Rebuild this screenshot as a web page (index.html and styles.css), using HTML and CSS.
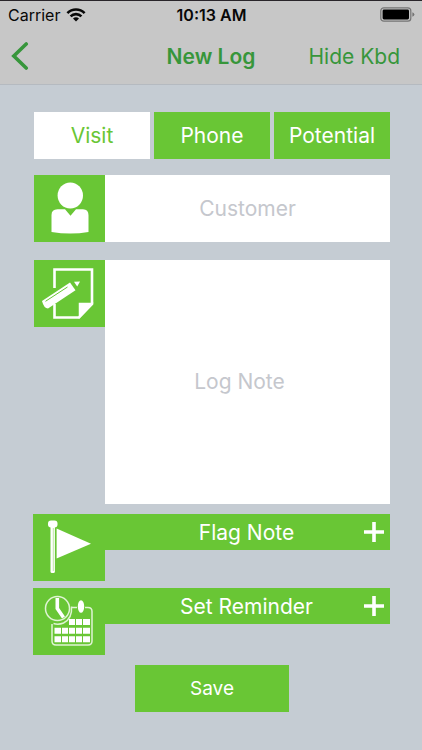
FILE: index.html
```html
<!DOCTYPE html>
<html lang="en">
<head>
<meta charset="utf-8">
<meta name="viewport" content="width=device-width, initial-scale=1">
<title>New Log</title>
<link rel="stylesheet" href="styles.css">
</head>
<body>
<header class="top">
  <div class="status">
    <div class="carrier">
      <span>Carrier</span>
      <svg width="20" height="14" viewBox="0 0 20 14" fill="none" stroke="#080808" stroke-width="2.6" aria-hidden="true">
        <path d="M1.4 5.1a12.2 12.2 0 0 1 17.2 0"/>
        <path d="M4.6 8.4a7.6 7.6 0 0 1 10.8 0"/>
        <path d="M7 10.6a4.3 4.3 0 0 1 6 0L10 13.6z" fill="#080808" stroke="none"/>
      </svg>
    </div>
    <span class="time">10:13 AM</span>
    <svg class="battery" width="35" height="15" viewBox="0 0 35 15" aria-hidden="true">
      <rect x=".8" y=".8" width="30" height="13.4" rx="3" fill="none" stroke="#747474" stroke-width="1.2"/>
      <rect x="2.6" y="2.6" width="26.4" height="9.8" rx="1.4" fill="#000"/>
      <path d="M32.4 5.2q2 .8 2 2.3t-2 2.3z" fill="#747474"/>
    </svg>
  </div>
  <nav class="nav">
    <button class="back" type="button" aria-label="Back">
      <svg width="18" height="28" viewBox="0 0 18 28" fill="none" stroke="#37963b" stroke-width="3.6" stroke-linecap="round" aria-hidden="true"><path d="M15.2 2L2.8 14l12.4 12"/></svg>
    </button>
    <h1 class="title">New Log</h1>
    <button class="hide" type="button">Hide Kbd</button>
  </nav>
</header>
<main class="page">
  <form class="form">
    <div class="tabs">
      <button class="tab tab-on" type="button">Visit</button>
      <button class="tab" type="button">Phone</button>
      <button class="tab" type="button">Potential</button>
    </div>
    <div class="field customer">
      <label class="tile" for="customer" aria-label="Customer">
        <svg width="71" height="67" viewBox="0 0 71 67" fill="#fff" aria-hidden="true">
          <ellipse cx="36.300" cy="20.500" rx="12.700" ry="13"/>
          <path d="M17.500 57V40q0-5.500 6-5.700h7.500l5.500 6.500 5.500-6.500h7q5.500.2 5.500 6V57q-18 3-37 0z"/>
        </svg>
      </label>
      <input class="entry" id="customer" type="text" placeholder="Customer">
    </div>
    <div class="field note">
      <label class="tile" for="note" aria-label="Log note">
        <svg width="71" height="67" viewBox="0 0 71 67" fill="none" aria-hidden="true">
          <path d="M20.500 28V9.500h37.500V44L45 57.500H20.500V44" stroke="#fff" stroke-width="2.600"/>
          <path d="M45.500 57V43.500H58z" fill="#fff" stroke="#fff" stroke-width="1.500"/>
          <path d="M8 41L36 22.500l5.500 7.800L14 48.500q-4 0-6-7.500z" fill="#fff"/>
          <path d="M11.500 41.300l22-14.300" stroke="#69c635" stroke-width="1"/>
          <path d="M40 21.800l6-.3-2.800 5z" fill="#fff"/>
        </svg>
      </label>
      <textarea class="entry area" id="note" placeholder="Log Note"></textarea>
    </div>
    <button class="row flag" type="button">
      <span class="tile">
        <svg width="72" height="67" viewBox="0 0 72 67" fill="#fff" aria-hidden="true">
          <rect x="15" y="6.500" width="9.500" height="7" rx="3"/>
          <rect x="17.500" y="11" width="4.400" height="48" rx="1.500"/>
          <path d="M23.600 14.500L58 29.700 23.600 44.500z"/>
          <path d="M20.300 14v43" stroke="#a4dc83" stroke-width=".7"/>
        </svg>
      </span>
      <span class="bar"><span class="bar-text">Flag Note</span>
        <svg class="plus" width="20" height="20" viewBox="0 0 20 20" stroke="#fff" stroke-width="3.600" aria-hidden="true"><path d="M0 10h20M10 0v20"/></svg>
      </span>
    </button>
    <button class="row reminder" type="button">
      <span class="tile">
        <svg width="72" height="67" viewBox="0 0 72 67" fill="none" stroke="#fff" aria-hidden="true">
          <g stroke="#e0f4d4" stroke-width="1.500">
            <path d="M39 19.500h5M52 19.500h3q4 0 4 4V53q0 4-4 4H23q-4 0-4-4V36"/>
            <circle cx="24.500" cy="20.500" r="12"/>
            <path d="M38.500 18.500q1 12-8 16.500-5 2-10 .5"/>
          </g>
          <path d="M24.300 10v10.500l6.200 9" stroke-width="3.600"/>
          <ellipse cx="48" cy="18.500" rx="3.200" ry="6.300" fill="#fff" stroke="none"/>
          <path d="M36 34h21M21.500 42.800H57M21.500 51.300H57" stroke-width="6"/>
          <path d="M28.500 38v17M35.500 38v17M42.500 30v25M49.500 30v25" stroke="#69c635" stroke-width="1"/>
        </svg>
      </span>
      <span class="bar"><span class="bar-text">Set Reminder</span>
        <svg class="plus" width="20" height="20" viewBox="0 0 20 20" stroke="#fff" stroke-width="3.600" aria-hidden="true"><path d="M0 10h20M10 0v20"/></svg>
      </span>
    </button>
    <button class="save" type="submit">Save</button>
  </form>
</main>
</body>
</html>
```
FILE: styles.css
```css
* {
  box-sizing: border-box;
}

body {
  margin: 0;
  min-height: 100vh;
  background: #c5ccd3;
  color: #080808;
  font-family: Inter, "Liberation Sans", sans-serif;
}

button,
input,
textarea {
  margin: 0;
  padding: 0;
  border: 0;
  border-radius: 0;
  background: none;
  font: inherit;
}

svg {
  display: block;
}

.top {
  border-top: 1px solid #29252a;
  border-bottom: 1px solid #b5bac0;
  background: #c7c7c7;
}

.status,
.nav {
  display: grid;
  grid-template-columns: 1fr auto 1fr;
  align-items: center;
}

.status {
  height: 27px;
  padding: 0 7px 0 8px;
  font-size: 16px;
}

.carrier {
  display: flex;
  align-items: center;
  gap: 6px;
}

.time {
  font-weight: 600;
}

.battery {
  justify-self: end;
}

.nav {
  height: 56px;
  padding: 0 11px;
  color: #37963b;
  font-size: 21px;
}

.back {
  justify-self: start;
}

.title {
  margin: 0;
  font-size: 21px;
  font-weight: 600;
}

.hide {
  justify-self: end;
  padding: 0 11px;
  color: inherit;
}

.page {
  padding: 27px 32px 38px 34px;
}

.form {
  display: flex;
  flex-direction: column;
  font-size: 21px;
}

.tabs {
  display: grid;
  grid-template-columns: repeat(3, 1fr);
  gap: 4px;
  margin-bottom: 16px;
}

.tab {
  height: 47px;
  background: #69c635;
  color: #fff;
}

.tab-on {
  background: #fff;
  color: #69c635;
}

.field {
  display: flex;
  align-items: flex-start;
}

.customer {
  margin-bottom: 18px;
}

.note {
  margin-bottom: 10px;
}

.tile {
  flex: none;
  background: #69c635;
}

.entry {
  flex: 1;
  min-width: 0;
  height: 67px;
  background: #fff;
  text-align: center;
}

.entry::placeholder {
  color: #c5c7cd;
  opacity: 1;
}

.area {
  height: 244px;
  padding: 108px 24px 108px 8px;
  line-height: 28px;
  resize: none;
}

.row {
  display: flex;
  align-items: flex-start;
  margin-left: -1px;
  color: #fff;
}

.flag {
  margin-bottom: 7px;
}

.reminder {
  margin-bottom: 10px;
}

.bar {
  flex: 1;
  display: flex;
  align-items: center;
  height: 36px;
  padding-right: 6px;
  background: #69c635;
}

.bar-text {
  flex: 1;
  padding-left: 24px;
}

.save {
  align-self: center;
  width: 154px;
  height: 47px;
  background: #69c635;
  color: #fff;
  font-size: 19px;
}
```
